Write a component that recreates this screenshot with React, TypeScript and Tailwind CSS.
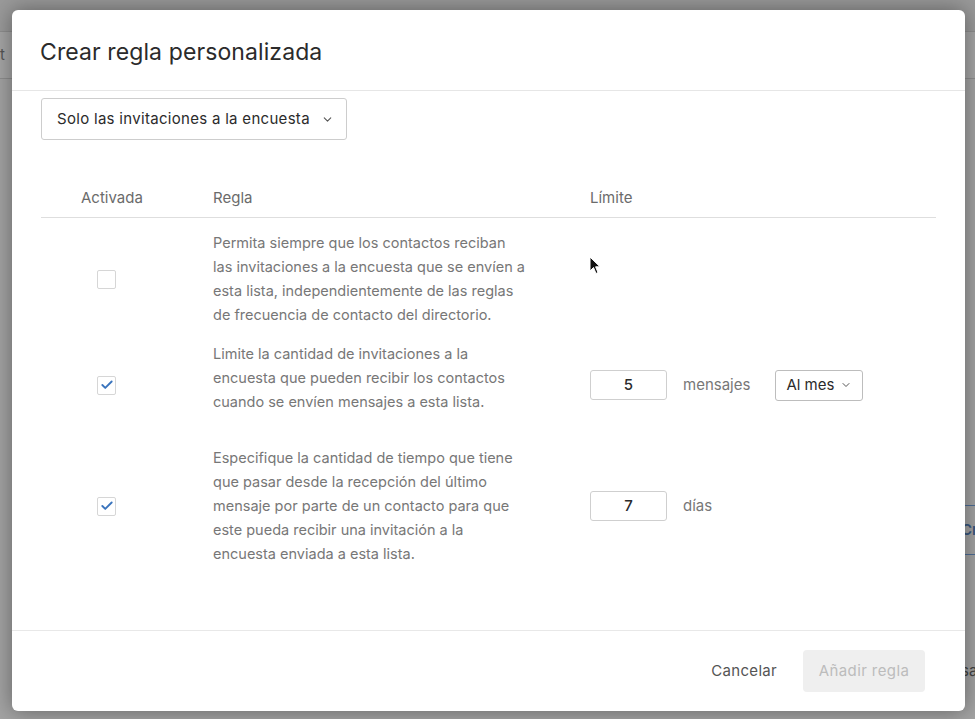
import { ChevronDown, Check } from "lucide-react";

const rules = [
  {
    checked: false,
    lines: [
      "Permita siempre que los contactos reciban",
      "las invitaciones a la encuesta que se envíen a",
      "esta lista, independientemente de las reglas",
      "de frecuencia de contacto del directorio.",
    ],
  },
  {
    checked: true,
    lines: [
      "Limite la cantidad de invitaciones a la",
      "encuesta que pueden recibir los contactos",
      "cuando se envíen mensajes a esta lista.",
    ],
  },
  {
    checked: true,
    lines: [
      "Especifique la cantidad de tiempo que tiene",
      "que pasar desde la recepción del último",
      "mensaje por parte de un contacto para que",
      "este pueda recibir una invitación a la",
      "encuesta enviada a esta lista.",
    ],
  },
];

function Checkbox({ checked }: { checked: boolean }) {
  return (
    <div className="w-[19px] h-[19px] border border-[#d6d6d6] rounded-[2px] bg-white flex items-center justify-center">
      {checked && <Check size={14} strokeWidth={3.2} className="text-[#3a74bd]" />}
    </div>
  );
}

function NumberBox({ value }: { value: string }) {
  return (
    <div className="w-[77px] h-[30px] border border-[#cfcfcf] rounded-[3px] flex items-center justify-center text-[15px] text-[#2b2b2b] font-medium">
      {value}
    </div>
  );
}

export default function App() {
  return (
    <div
      className="relative w-[975px] h-[719px] overflow-hidden bg-[#a3a3a3]"
      style={{ fontFamily: "Inter, 'Liberation Sans', sans-serif" }}
    >
      {/* page behind the overlay */}
      <div className="absolute inset-0 flex flex-col">
        <div className="h-[31px] bg-[#9a9a9a]" />
        <div className="h-[48px] border-y border-[#8e8e8e] bg-[#a6a6a6] flex items-center text-[15px] text-[#555] -ml-[8px]">
          st
        </div>
      </div>
      <div className="absolute right-0 top-[505px] w-[12px] h-[50px] border-y border-[#4d6d96] flex items-center text-[15px] font-semibold text-[#37577f] overflow-hidden">
        <span className="-ml-[2px]">Cr</span>
      </div>
      <div className="absolute right-0 top-[660px] w-[12px] text-[15px] text-[#444] overflow-hidden">
        <span className="-ml-[2px]">sa</span>
      </div>

      {/* modal */}
      <div className="absolute left-[12px] top-[10px] w-[953px] h-[701px] bg-white rounded-[6px] shadow-[0_0_22px_rgba(0,0,0,0.4)] flex flex-col">
        <div className="h-[81px] border-b border-[#e6e6e6] flex items-center pl-[28px]">
          <h1 className="text-[23px] tracking-[0.1px] text-[#2b2b2b] pt-[4px]">Crear regla personalizada</h1>
        </div>

        <div className="flex-1 px-[29px] pt-[7px]">
          <div className="w-[306px] h-[42px] border border-[#cdcdcd] rounded-[3px] flex items-center pl-[15px] gap-[11px] text-[15px] tracking-[0.3px] text-[#2b2b2b]">
            <span className="whitespace-nowrap">Solo las invitaciones a la encuesta</span>
            <ChevronDown size={13} strokeWidth={2} className="text-[#555]" />
          </div>

          <div className="mt-[39px] h-[39px] border-b border-[#dedede] flex items-center text-[15px] text-[#6b6b6b]">
            <div className="w-[172px] pl-[40px]">Activada</div>
            <div className="w-[377px]">Regla</div>
            <div>Límite</div>
          </div>

          <div className="pt-[13px] text-[14.5px] leading-[24px] text-[#777]">
            {rules.map((r, i) => (
              <div
                key={i}
                className={`flex items-center ${
                  i === 0 ? "h-[96px]" : i === 1 ? "mt-[15px] h-[86px]" : "mt-[18px] h-[120px]"
                }`}
              >
                <div className="w-[172px] pl-[56px]">
                  <Checkbox checked={r.checked} />
                </div>
                <div className={`w-[377px] ${i === 1 ? "self-start" : ""}`}>
                  {r.lines.map((l) => (
                    <div key={l} className="whitespace-nowrap">
                      {l}
                    </div>
                  ))}
                </div>
                {i === 1 && (
                  <div className="flex items-center">
                    <NumberBox value="5" />
                    <span className="ml-[16px] text-[15px] text-[#777]">mensajes</span>
                    <div className="ml-[25px] w-[88px] h-[31px] border border-[#bdbdbd] rounded-[3px] flex items-center pl-[10px] gap-[6px] text-[15px] text-[#2b2b2b]">
                      <span>Al mes</span>
                      <ChevronDown size={12} strokeWidth={2} className="text-[#555]" />
                    </div>
                  </div>
                )}
                {i === 2 && (
                  <div className="flex items-center">
                    <NumberBox value="7" />
                    <span className="ml-[16px] text-[15px] text-[#777]">días</span>
                  </div>
                )}
              </div>
            ))}
          </div>
        </div>

        <div className="h-[81px] border-t border-[#e8e8e8] flex items-center justify-end pr-[40px] gap-[10px]">
          <button className="px-[16px] h-[42px] text-[15px] tracking-[0.3px] text-[#555]">Cancelar</button>
          <button className="w-[122px] h-[42px] rounded-[4px] bg-[#efefef] text-[15px] tracking-[0.4px] text-[#bcbcbc]">
            Añadir regla
          </button>
        </div>
      </div>

      {/* mouse pointer */}
      <svg className="absolute left-[589px] top-[256px]" width="12" height="19" viewBox="0 0 12 19">
        <path d="M1 1 L1 15 L4.5 11.5 L7 17.5 L9 16.5 L6.6 10.8 L11 10.8 Z" fill="#111" stroke="#fff" strokeWidth="1" />
      </svg>
    </div>
  );
}
